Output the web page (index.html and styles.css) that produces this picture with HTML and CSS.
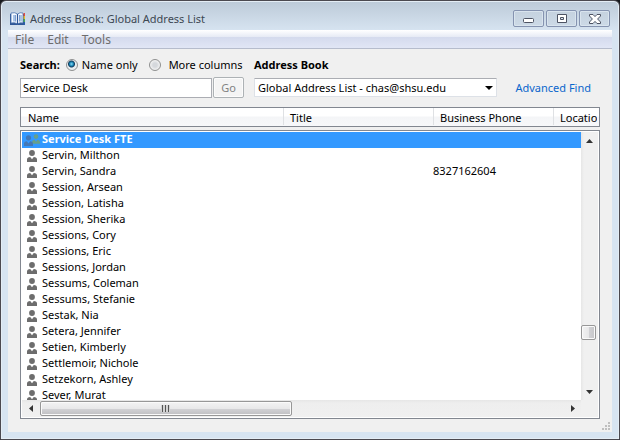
FILE: index.html
```html
<!DOCTYPE html>
<html lang="en">
<head>
<meta charset="utf-8">
<title>Address Book: Global Address List</title>
<link rel="stylesheet" href="styles.css">
</head>
<body>
<svg class="defs" aria-hidden="true">
  <symbol id="person" viewBox="0 0 10 12">
    <circle cx="5" cy="3" r="2.900"/>
    <path d="M0 12V9.500Q0 7.200 3.200 6.900L5 9.300 6.800 6.900Q10 7.200 10 9.500V12Z"/>
  </symbol>
</svg>
<div class="window">
  <header class="titlebar">
    <svg class="book" viewBox="0 0 16 14" aria-hidden="true">
      <path d="M0 2H14V13H0Z" fill="#2f5796"/>
      <path d="M1 1Q5 0 7.500 2 10 0 13 1V11Q10 10 7.500 12 5 10 1 11Z" fill="#f4f9ff" stroke="#4a74b0" stroke-width=".8"/>
      <path d="M7.500 2V12" stroke="#2f5796" stroke-width="1.200"/>
      <path d="M3 3h2.500v6.500H3ZM9.500 3H12v6.500H9.500Z" fill="#a9c4e6"/>
      <path d="M5.500 3v6.500M9.500 3v6.500" stroke="#6b93c9" stroke-width=".8"/>
      <path d="M13.500 1H15V4H13.500Z" fill="#df4b42"/>
      <path d="M13.500 4H15V7H13.500Z" fill="#e8b82e"/>
      <path d="M13.500 7H15V10H13.500Z" fill="#49a856"/>
      <path d="M13.500 10H15V13H13.500Z" fill="#2b5fa8"/>
    </svg>
    <h1>Address Book: Global Address List</h1>
    <div class="captions">
      <button type="button" aria-label="Minimize"><svg viewBox="0 0 12 10"><rect x=".5" y="4.500" width="10" height="4" rx="1" fill="#fff" stroke="#4d5363"/></svg></button>
      <button type="button" aria-label="Maximize"><svg viewBox="0 0 12 10"><path d="M1.500.5h9v8h-9Z" fill="#fff" stroke="#4d5363"/><path d="M4.500 3.500h3v2h-3Z" fill="#dce6f0" stroke="#4d5363"/></svg></button>
      <button type="button" aria-label="Close"><svg viewBox="0 0 12 10"><path d="M.5.500H4L6 2.600 8 .5h3.500V2L8.600 5l2.900 3v1.500H8L6 7.400 4 9.500H.5V8l2.900-3L.5 2Z" fill="#fff" stroke="#4d5363"/></svg></button>
    </div>
  </header>
  <div class="client">
    <nav class="menu">
      <button type="button">File</button>
      <button type="button">Edit</button>
      <button type="button">Tools</button>
    </nav>
    <main>
      <form class="search">
        <div class="modes">
          <label class="strong" for="query">Search:</label>
          <label class="mode"><input type="radio" name="mode" checked>Name only</label>
          <label class="mode more"><input type="radio" name="mode">More columns</label>
        </div>
        <label class="strong" for="book">Address Book</label>
        <div class="find">
          <input type="text" id="query" value="Service Desk">
          <button type="button" disabled>Go</button>
        </div>
        <div class="source">
          <div class="picker">
            <select id="book"><option>Global Address List - chas@shsu.edu</option></select>
            <svg viewBox="0 0 8 4" aria-hidden="true"><path d="M0 0H8L4 4Z"/></svg>
          </div>
          <a href="#advanced">Advanced Find</a>
        </div>
      </form>
      <table class="columns">
        <thead><tr><th>Name</th><th>Title</th><th>Business Phone</th><th>Location</th></tr></thead>
      </table>
      <div class="list">
        <div class="view">
          <table class="entries" aria-label="Addresses">
            <tbody>
              <tr class="selected"><td><svg class="group" viewBox="0 0 16 14"><use href="#person" x="8" y="1" width="8" height="10" fill="#68a08c"/><use href="#person" x="0" y="2" width="9" height="11" fill="#4478b5"/></svg>Service Desk FTE</td><td></td><td></td></tr>
              <tr><td><svg><use href="#person"/></svg>Servin, Milthon</td><td></td><td></td></tr>
              <tr><td><svg><use href="#person"/></svg>Servin, Sandra</td><td></td><td>8327162604</td></tr>
              <tr><td><svg><use href="#person"/></svg>Session, Arsean</td><td></td><td></td></tr>
              <tr><td><svg><use href="#person"/></svg>Session, Latisha</td><td></td><td></td></tr>
              <tr><td><svg><use href="#person"/></svg>Session, Sherika</td><td></td><td></td></tr>
              <tr><td><svg><use href="#person"/></svg>Sessions, Cory</td><td></td><td></td></tr>
              <tr><td><svg><use href="#person"/></svg>Sessions, Eric</td><td></td><td></td></tr>
              <tr><td><svg><use href="#person"/></svg>Sessions, Jordan</td><td></td><td></td></tr>
              <tr><td><svg><use href="#person"/></svg>Sessums, Coleman</td><td></td><td></td></tr>
              <tr><td><svg><use href="#person"/></svg>Sessums, Stefanie</td><td></td><td></td></tr>
              <tr><td><svg><use href="#person"/></svg>Sestak, Nia</td><td></td><td></td></tr>
              <tr><td><svg><use href="#person"/></svg>Setera, Jennifer</td><td></td><td></td></tr>
              <tr><td><svg><use href="#person"/></svg>Setien, Kimberly</td><td></td><td></td></tr>
              <tr><td><svg><use href="#person"/></svg>Settlemoir, Nichole</td><td></td><td></td></tr>
              <tr><td><svg><use href="#person"/></svg>Setzekorn, Ashley</td><td></td><td></td></tr>
              <tr><td><svg><use href="#person"/></svg>Sever, Murat</td><td></td><td></td></tr>
            </tbody>
          </table>
        </div>
        <div class="vbar">
          <button type="button" aria-label="Scroll up"><svg viewBox="0 0 7 4"><path d="M0 4H7L3.500 0Z"/></svg></button>
          <div class="before"></div>
          <div class="thumb"></div>
          <div class="after"></div>
          <button type="button" aria-label="Scroll down"><svg viewBox="0 0 7 4"><path d="M0 0H7L3.500 4Z"/></svg></button>
        </div>
        <div class="hbar">
          <button type="button" aria-label="Scroll left"><svg class="side" viewBox="0 0 4 7"><path d="M4 0V7L0 3.500Z"/></svg></button>
          <div class="track"><div class="thumb"><svg class="grip" viewBox="0 0 9 7"><path d="M1.500 0V7M4.500 0V7M7.500 0V7" stroke="#fff" stroke-width="3"/><path d="M1.500 0V7M4.500 0V7M7.500 0V7" stroke="#555" stroke-width="1.500"/></svg></div></div>
          <button type="button" aria-label="Scroll right"><svg class="side" viewBox="0 0 4 7"><path d="M0 0V7L4 3.500Z"/></svg></button>
        </div>
      </div>
    </main>
    <svg class="resize" viewBox="0 0 8 8" aria-hidden="true"><path d="M6 0h2v2H6ZM3 3h2v2H3ZM6 3h2v2H6ZM0 6h2v2H0ZM3 6h2v2H3ZM6 6h2v2H6Z"/></svg>
  </div>
</div>
</body>
</html>
```
FILE: styles.css
```css
* { box-sizing: border-box; }

body {
  margin: 0;
  background: #17191d;
  color: #000;
  font: 11px/16px "Noto Sans", "Open Sans", sans-serif;
}

button, input, select { font: inherit; color: inherit; margin: 0; }
button { padding: 0; border: 0; background: none; }
svg { display: block; flex: none; }
.defs { position: absolute; width: 0; height: 0; }

.window {
  display: flex;
  flex-direction: column;
  height: 100vh;
  padding: 0 7px 7px;
  border: 1px solid #4b4950;
  border-radius: 6px 6px 0 0;
  background: linear-gradient(#bccad8, #d7e4f1 30px);
  box-shadow: inset 0 0 0 1px #e4edf5;
}

.titlebar {
  display: flex;
  align-items: center;
  height: 29px;
  padding: 6px 2px 0;
}
.titlebar h1 {
  flex: 1;
  margin: 0 0 0 4px;
  color: #3d4853;
  font-size: 11px;
  font-weight: 400;
}
.book { width: 16px; height: 14px; }
.captions { display: flex; gap: 2px; }
.captions button {
  display: grid;
  place-items: center;
  width: 31px;
  height: 17px;
  border: 1px solid #8593b0;
  border-radius: 2px;
  background: linear-gradient(#c5d2df, #ccd9e6);
  box-shadow: inset 0 0 0 1px #d9e4ee;
}
.captions svg { width: 12px; height: 10px; }

.client {
  position: relative;
  display: flex;
  flex: 1;
  flex-direction: column;
  min-height: 0;
  background: #f0f0f0;
}
.menu {
  display: flex;
  gap: 13px;
  height: 19px;
  padding: 0 7px;
  border-bottom: 1px solid #b6bccc;
  background: linear-gradient(#fff, #e6eaf5 7px, #d4daed 7px, #e1e6f5);
  color: #6d6d6d;
  font-size: 12px;
}
.menu button { height: 19px; }

main {
  display: flex;
  flex: 1;
  flex-direction: column;
  min-height: 0;
  padding: 8px 12px 13px;
}
.search {
  display: grid;
  grid-template-columns: 224px 1fr;
  gap: 4px 10px;
  margin-bottom: 9px;
}
.strong { font-weight: 700; }
.modes, .mode, .find, .source { display: flex; align-items: center; white-space: nowrap; }
.mode { margin-left: 6px; }
.more { margin-left: 11px; }
.mode input {
  appearance: none;
  flex: none;
  width: 12px;
  height: 12px;
  margin-right: 4px;
  border: 1px solid #8e8f8f;
  border-radius: 50%;
  background: radial-gradient(circle, #d5d8dc 2px, #f4f4f4 5px);
}
.mode input:checked {
  background: radial-gradient(circle at 45% 40%, #8bdcf5 0, #1682b2 2px, #123c5c 3px, #e8edf0 4px);
}
.more input { margin-right: 8px; }

.find { gap: 1px; }
.find input {
  flex: 1;
  min-width: 0;
  height: 20px;
  padding: 0 2px;
  border: 1px solid #abadb3;
  background: #fff;
}
.find button {
  width: 31px;
  height: 21px;
  border: 1px solid #adb2b5;
  border-radius: 2px;
  background: #f4f4f4;
  box-shadow: inset 0 0 0 1px #fcfcfc;
  color: #838383;
}
.source { justify-content: space-between; padding-right: 9px; }
.picker { position: relative; width: 243px; }
.picker select {
  display: block;
  appearance: none;
  width: 100%;
  height: 19px;
  padding: 0 3px;
  border: 1px solid #dde1e7;
  border-top-color: #abadb3;
  border-radius: 1px;
  background: #fff;
}
.picker svg { position: absolute; top: 8px; right: 4px; width: 8px; height: 4px; pointer-events: none; }
.source a { color: #0a66cc; text-decoration: none; }

table { display: block; border-spacing: 0; }
thead, tbody { display: block; }
tr { display: grid; }
th, td { padding: 0; text-align: left; white-space: nowrap; }

.columns {
  height: 20px;
  margin-bottom: 3px;
  border: 1px solid #828790;
  background: linear-gradient(#fff 8px, #f4f5f7 9px, #f7f8fa);
}
.columns tr { grid-template-columns: 262px 150px 120px 1fr; }
.columns th {
  height: 17px;
  padding-left: 6px;
  overflow: hidden;
  border-left: 1px solid #dfe1e4;
  font-weight: 400;
  line-height: 20px;
}
.columns th:first-child { border-color: transparent; }
.columns th:last-child { margin-right: 2px; }

.list {
  display: grid;
  flex: 1;
  grid-template: minmax(0, 1fr) 17px / minmax(0, 1fr) 17px;
  min-height: 0;
  padding: 1px;
  border: 1px solid #828790;
  background: #f0f0f0;
  box-shadow: inset 0 0 0 1px #fff;
}
.view { overflow: hidden; background: #fff; }
.entries tr { grid-template-columns: 261px 150px 1fr; height: 16px; }
.entries td { display: flex; line-height: 14px; }
.entries td:first-child { padding-left: 5px; }
.entries svg { width: 10px; height: 12px; margin: 2px 5px 0 0; fill: #6d6d6d; }
.entries .selected { background: #3399ff; color: #fff; font-weight: 700; }
.entries .selected td:first-child { padding-left: 2px; }
.entries .group { width: 16px; height: 14px; margin: 1px 2px 0 0; }

.vbar { display: flex; flex-direction: column; background: linear-gradient(90deg, #e6e6e6, #f0f0f0 3px, #f0f0f0); }
.hbar { display: flex; background: linear-gradient(#e6e6e6, #eee 3px, #f0f0f0); }
.vbar button, .hbar button { display: grid; place-items: center; width: 17px; height: 17px; }
.list button svg { width: 7px; height: 4px; fill: #333; }
.list button .side { width: 4px; height: 7px; }
.before { flex: 176; }
.after { flex: 43; }
.thumb { border: 1px solid #979797; border-radius: 2px; box-shadow: inset 0 0 0 1px #fafafa; }
.vbar .thumb { width: 15px; height: 15px; background: linear-gradient(90deg, #f3f3f3, #e8e8e9 50%, #d3d3d6 50%, #c5c5c8); }
.track { flex: 1; padding: 1px 0 0 1px; }
.hbar .thumb {
  display: grid;
  place-items: center;
  width: 48%;
  height: 15px;
  background: linear-gradient(#f3f3f3, #e8e8e9 50%, #d3d3d6 50%, #bfbfc2);
}
.grip { width: 9px; height: 7px; }
.resize { position: absolute; right: 2px; bottom: 2px; width: 8px; height: 8px; fill: #bfbfbf; }
```
